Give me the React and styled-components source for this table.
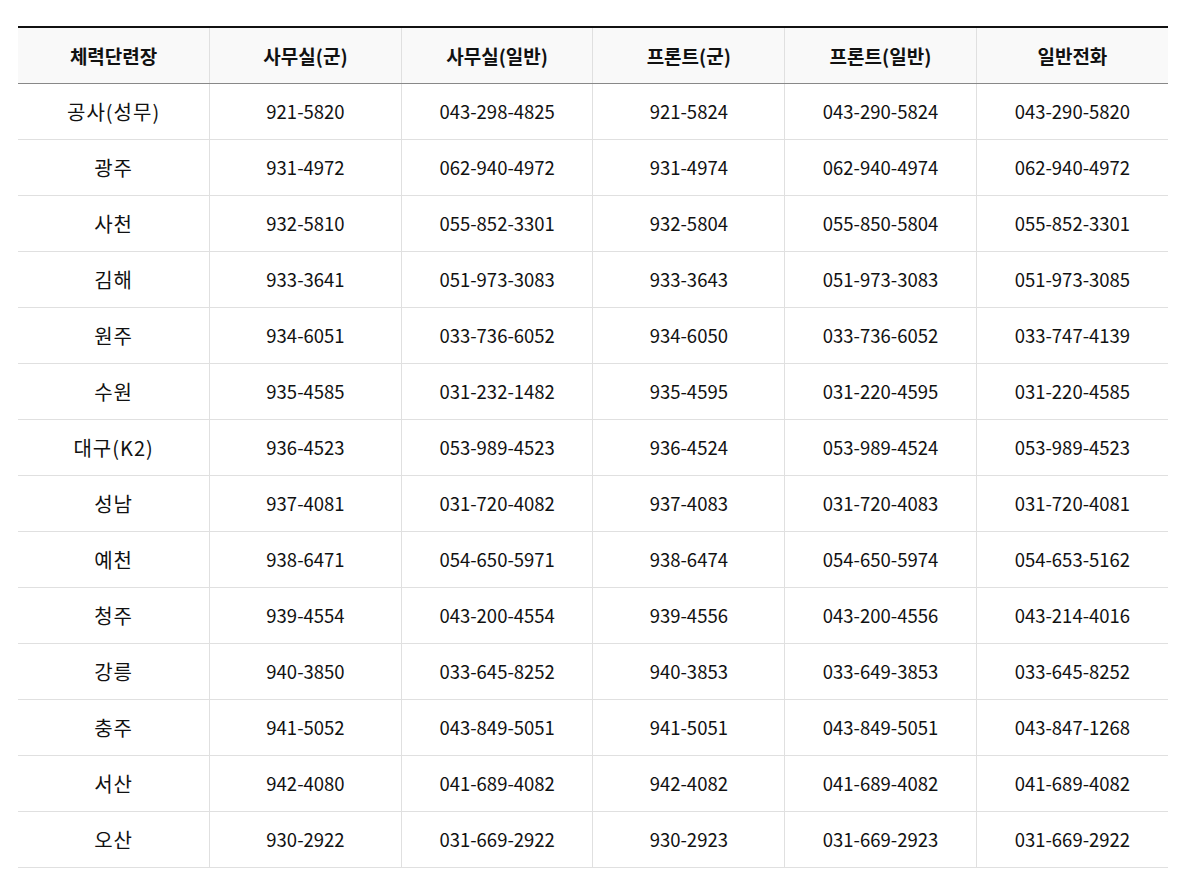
import React from "react";
import styled, { createGlobalStyle } from "styled-components";

const GlobalStyle = createGlobalStyle`
  html, body { margin: 0; padding: 0; background: #fff; }
  body { font-family: "Noto Sans CJK KR", "Noto Sans", sans-serif; color: #111; }
`;

const Page = styled.div`
  padding: 26px 16px 0 18px;
`;

const Table = styled.table`
  width: 1150px;
  border-collapse: collapse;
  table-layout: fixed;
  border-top: 2px solid #111;
`;

const HeadCell = styled.th`
  height: 55px;
  padding: 0;
  background: #f9f9f9;
  font-size: 19px;
  font-weight: 700;
  color: #111;
  text-align: center;
  line-height: 1;
  border-bottom: 1px solid #888;
  border-left: ${(p) => (p.$first ? "none" : "1px solid #e0e0e0")};
`;

const Cell = styled.td`
  height: 55px;
  padding: 0;
  font-size: ${(p) => (p.$first ? "20px" : "18.5px")};
  letter-spacing: ${(p) => (p.$first ? "1px" : "0")};
  font-weight: 400;
  color: #111;
  text-align: center;
  line-height: 1;
  border-bottom: 1px solid #e0e0e0;
  border-left: ${(p) => (p.$first ? "none" : "1px solid #e0e0e0")};
`;

const headers = ["체력단련장", "사무실(군)", "사무실(일반)", "프론트(군)", "프론트(일반)", "일반전화"];

const rows = [
  ["공사(성무)", "921-5820", "043-298-4825", "921-5824", "043-290-5824", "043-290-5820"],
  ["광주", "931-4972", "062-940-4972", "931-4974", "062-940-4974", "062-940-4972"],
  ["사천", "932-5810", "055-852-3301", "932-5804", "055-850-5804", "055-852-3301"],
  ["김해", "933-3641", "051-973-3083", "933-3643", "051-973-3083", "051-973-3085"],
  ["원주", "934-6051", "033-736-6052", "934-6050", "033-736-6052", "033-747-4139"],
  ["수원", "935-4585", "031-232-1482", "935-4595", "031-220-4595", "031-220-4585"],
  ["대구(K2)", "936-4523", "053-989-4523", "936-4524", "053-989-4524", "053-989-4523"],
  ["성남", "937-4081", "031-720-4082", "937-4083", "031-720-4083", "031-720-4081"],
  ["예천", "938-6471", "054-650-5971", "938-6474", "054-650-5974", "054-653-5162"],
  ["청주", "939-4554", "043-200-4554", "939-4556", "043-200-4556", "043-214-4016"],
  ["강릉", "940-3850", "033-645-8252", "940-3853", "033-649-3853", "033-645-8252"],
  ["충주", "941-5052", "043-849-5051", "941-5051", "043-849-5051", "043-847-1268"],
  ["서산", "942-4080", "041-689-4082", "942-4082", "041-689-4082", "041-689-4082"],
  ["오산", "930-2922", "031-669-2922", "930-2923", "031-669-2923", "031-669-2922"],
];

export default function App() {
  return (
    <Page>
      <GlobalStyle />
      <Table>
        <thead>
          <tr>
            {headers.map((h, i) => (
              <HeadCell key={h} $first={i === 0}>{h}</HeadCell>
            ))}
          </tr>
        </thead>
        <tbody>
          {rows.map((r) => (
            <tr key={r[0]}>
              {r.map((c, i) => (
                <Cell key={i} $first={i === 0}>{c}</Cell>
              ))}
            </tr>
          ))}
        </tbody>
      </Table>
    </Page>
  );
}
